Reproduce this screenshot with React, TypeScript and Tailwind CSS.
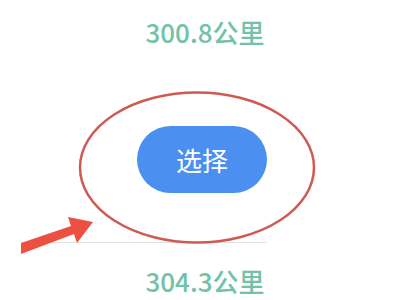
import React from 'react';

export default function App() {
  return (
    <div
      className="relative w-[400px] h-[300px] bg-white overflow-hidden"
      style={{ fontFamily: '"Noto Sans CJK SC", "Noto Sans", sans-serif' }}
    >
      <div className="flex flex-col items-center pl-[10px]">
        <div className="mt-[16px] text-[26px] leading-[32px] font-medium text-[#72c2a8]">300.8公里</div>
        <div className="mt-[78px] ml-[-6px] w-[130px] h-[67px] rounded-full bg-[#4b8ff0] flex items-center justify-center text-white text-[26px]">
          选择
        </div>
      </div>

      {/* divider */}
      <div className="ml-[21px] mt-[49px] w-[246px] h-px bg-[#e2e2e2]" />

      <div className="flex justify-center pl-[10px]">
        <div className="mt-[22px] text-[26px] leading-[32px] font-medium text-[#72c2a8]">304.3公里</div>
      </div>

      {/* annotation: ellipse + arrow */}
      <svg className="absolute left-0 top-0" width="400" height="300" viewBox="0 0 400 300">
        <ellipse cx="197" cy="167.5" rx="117" ry="75" fill="none" stroke="#cf5a52" strokeWidth="2.5" />
        <polygon points="21,243 71,226 68,217 93,222 77,243 74,234 21,254" fill="#ec5040" />
      </svg>
    </div>
  );
}
